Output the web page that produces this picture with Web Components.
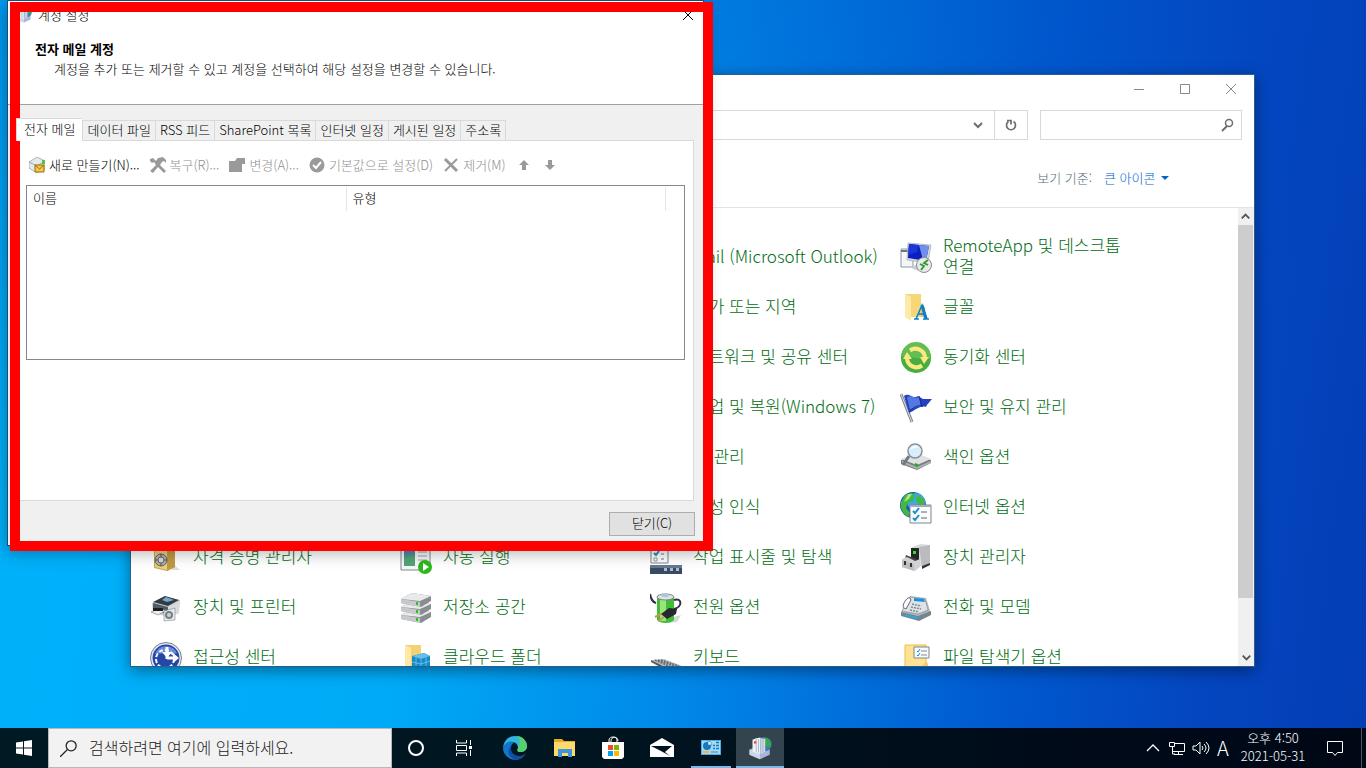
<!DOCTYPE html>
<html lang="ko">
<head>
<meta charset="utf-8">
<title>제어판</title>
<style>
  body {
    margin: 0;
    min-height: 100vh;
    display: flex;
    font-family: "Noto Sans CJK KR", "Noto Sans", sans-serif;
    font-size: 13px;
    font-weight: 300;
    line-height: 20px;
    color: #000;
  }
</style>
</head>
<body>
<desk-top>
  <control-panel></control-panel>
  <account-dialog heading="전자 메일 계정">
    계정을 추가 또는 제거할 수 있고 계정을 선택하여 해당 설정을 변경할 수 있습니다.
  </account-dialog>
  <red-frame></red-frame>
  <task-bar slot="taskbar"></task-bar>
</desk-top>

<script>
// Icon drawings, each in its own viewBox
const icons = {
  remote: ['0 0 32 32', `
    <path d="M1 7h12v18H1z" fill="#f4f6f8" stroke="#8c97a3"/><path d="M1 9h10" stroke="#6b7683" stroke-width="2"/>
    <path d="M11 26l9-6 7 5-8 4z" fill="#c9ccd0"/><path d="M8 1l23 2-3 18-21-3z" fill="#d6dade" stroke="#9aa0a6" stroke-width=".6"/>
    <path d="M9 2l20 2-3 15-18-3z" fill="#0a1fc0"/><path d="M19 3l10 1-3 15-3-1z" fill="#6f8fea"/><path d="M9 2l10 1-2 7-9 3z" fill="#1a35d8"/>
    <circle cx="24" cy="23" r="7.500" fill="#e8e9ea" stroke="#8b8e92"/>
    <path d="M20 22l4 2-3 4M28 18l-4 3 4 2" fill="none" stroke="#2f9a2a" stroke-width="1.800"/>`],
  fonts: ['0 0 32 32', `
    <path d="M5 2h16v23H9z" fill="#f5d777"/><path d="M5 2l6 3v24l-6-4z" fill="#ffe9a6"/>
    <path d="M12 25h9v-10h4v10z" fill="#e6c25c"/>
    <path d="M14 27h5M23 27h6M16 27l6-14 5 14M18 22h8" fill="none" stroke="#0d80c8" stroke-width="1.500"/><path d="M22 13l4 14" stroke="#0d80c8" stroke-width="3"/>`],
  sync: ['0 0 32 32', `
    <circle cx="16" cy="16" r="15" fill="#48ad40"/><path d="M1 15a15 15 0 0 1 30 0c-6 6-24-3-30 0z" fill="#62bd55"/>
    <path d="M10 8.500a9.500 9.500 0 0 1 15 7M22 23.500a9.500 9.500 0 0 1-15-7" fill="none" stroke="#fae97e" stroke-width="4"/>
    <path d="M3 17h9l-5-7zM20 15h9l-5 7z" fill="#fae97e"/>`],
  flag: ['0 0 32 32', `
    <path d="M1 2l11 28" stroke="#7f858b" stroke-width="3"/><path d="M1 2l11 28" stroke="#d8dbde" stroke-width="1"/>
    <path d="M4 4c6-4 8 4 14 0l5 3 9 0c-3 4-5 5-6 8-6-2-10 3-17 6z" fill="#2643bf"/>
    <path d="M7 5c6-3 7 3 12 0l2 10c-6-1-7 2-11 3z" fill="#5478e3"/><path d="M10 18c5-3 7-5 13-4M19 4l3 11" stroke="#152c91" fill="none"/>`],
  search: ['0 0 32 32', `
    <path d="M1 18l16-6 14 6v3l-14 7-16-6z" fill="#7c7f82"/><path d="M1 17l16-6 14 6-14 6z" fill="#dfe1e3"/><path d="M2 19l15 6 14-6v2l-14 6-15-6z" fill="#aeb2b6"/>
    <path d="M15 21l3 1v3l-3-1z" fill="#23b315"/><path d="M9 14l-6 9" stroke="#73787d" stroke-width="3"/>
    <circle cx="15" cy="9" r="7" fill="#d9edfc" stroke="#899098" stroke-width="1.500"/><path d="M10 8c2-5 7-5 9-2-4-1-6 0-9 2z" fill="#fff"/>`],
  internet: ['0 0 32 32', `
    <circle cx="13" cy="13" r="13" fill="#175bb5"/><circle cx="16" cy="10" r="9" fill="#3ba9e3"/>
    <path d="M5 3l7-2 3 2-2 6-5 1-2 6 4 5-2 4c-6-4-8-9-7-15zM17 3c4 1 7 4 8 8l-4 3-5-5z" fill="#45b83c"/><path d="M8 2l4 0-3 5-5 3z" fill="#a8e67c"/>
    <path d="M10 13h21v18H10z" fill="#fafbfc" stroke="#7f868d"/><path d="M10 14h21" stroke="#a6acb3" stroke-width="2"/>
    <path d="M13 19l2 2 4-5M13 26l2 2 4-5" fill="none" stroke="#168dcf" stroke-width="2"/><path d="M21 20h6M21 26h6" stroke="#5c6774"/>`],
  device: ['0 0 32 32', `
    <path d="M12 5l9-3 9 1v18l-7 4-11-3z" fill="#d9dadc"/><path d="M19 5l11-2v18l-8 3z" fill="#b9bbbe"/><path d="M11 6l8 0v14l-8-2z" fill="#242628"/>
    <path d="M13 9h3v3h-3z" fill="#32df22"/><path d="M22 24l8-3v2l-8 4z" fill="#333"/><path d="M6 13l12 5-5 3-8-4z" fill="#444"/>
    <path d="M2 17l5-2 8 4 5-2v8l-5 4-13-4z" fill="#d0d2d4"/><path d="M2 18l12 4v7L2 25z" fill="#bcbec1"/><path d="M5 19v4M11 21v4" stroke="#333" stroke-width="2"/>`],
  phone: ['0 0 32 32', `
    <path d="M1 20l9-16 16 2 5 16-14 6z" fill="#b0b8be"/><path d="M1 20l17 4 13-5v4l-12 6-18-5z" fill="#77848c"/>
    <path d="M2 19l8-14 15 2 3 11-10 4z" fill="#dfe3e5" stroke="#7d878f" stroke-width=".6"/><path d="M14 6l10 1 1 3-11-1z" fill="#1790df"/>
    <path d="M12 12l9 2M11 15l10 2M10 18l9 2" stroke="#7c8b99" stroke-width="1.500" stroke-dasharray="2 1"/>
    <path d="M4 16c-3-2 3-12 6-10l1 2-5 9z" fill="#fbfbfb" stroke="#667"/><path d="M5 23l13 3" stroke="#28a9e5" stroke-width="2"/>`],
  fileoptions: ['0 0 32 32', `
    <path d="M5 3h21v29H5z" fill="#ffe394" stroke="#e9bf48"/><path d="M21 26l5-7 2 3v10h-7z" fill="#f4cc62"/>
    <path d="M14 5h15v11H14z" fill="#f7fbff" stroke="#7d858d"/><path d="M17 9l1 1 2-3M17 13l1 1 2-3" fill="none" stroke="#1891d5"/><path d="M21 9h6M21 13h6" stroke="#818b95"/>`],
  safe: ['0 0 32 32', `
    <path d="M22 28h8l-8-7z" fill="#ddd"/><path d="M4 4l8-3 13 2v22l-8 4-13-3z" fill="#cfa84a"/><path d="M17 7l8-3v21l-8 4z" fill="#c09a45"/><path d="M5 6l12 2v20L5 25z" fill="#ebcf82"/>
    <circle cx="11" cy="18" r="6" fill="#aeb2ae" stroke="#62615b"/><path d="M11 12v12M5 18h12" stroke="#54534e"/><circle cx="11" cy="18" r="3" fill="#d8dad7" stroke="#666"/>`],
  printer: ['0 0 32 32', `
    <path d="M2 11l13-6 15 3-1 13-10 4-16-4z" fill="#c9ccd0"/><path d="M3 10l12-6 14 4-11 6z" fill="#343a42"/><path d="M12 8l4-3 8 3-7 2z" fill="#73abcd"/>
    <path d="M3 11l15 4v7L3 18z" fill="#555b62"/><path d="M18 15l11-6v12l-11 4z" fill="#d8dadc"/><path d="M1 20l10-4 4 3-7 4z" fill="#eceeef" stroke="#777" stroke-width=".6"/><path d="M3 16h10v3H3z" fill="#1c1f24"/>
    <path d="M14 19l11-3v12l-11 1z" fill="#e6e8e9" stroke="#858a8e" stroke-width=".6"/><circle cx="19" cy="23" r="4" fill="#778087"/><circle cx="19" cy="23" r="2" fill="#cbd2d6"/>`],
  access: ['0 0 32 32', `
    <circle cx="16" cy="16" r="15.500" fill="#e8ebef" stroke="#777f8b"/><circle cx="16" cy="16" r="13.500" fill="#2447a8"/><path d="M5 12a12 12 0 0 1 22-1c-7 3-15-1-22 1z" fill="#688bdc"/>
    <circle cx="15" cy="17" r="9" fill="none" stroke="#fff" stroke-width="2" stroke-dasharray="4 2"/>
    <path d="M17 5v12M17 16h8" stroke="#fff" stroke-width="3"/><path d="M12 10h10l-5 6zM23 11l6 5-6 5z" fill="#fff"/>`],
  autoplay: ['0 0 32 32', `
    <path d="M1 1h29v27H1z" fill="#f6f7f9" stroke="#818990"/><path d="M4 4h11v20H4z" fill="#4f8ca8"/><path d="M4 17c4-6 7 0 11-5v12H4z" fill="#54a475"/>
    <path d="M18 6h9M18 10h9M18 14h9M18 18h9" stroke="#9ca3a9"/><circle cx="25" cy="25" r="7" fill="#2cb91b"/><path d="M23 21l6 4-6 4z" fill="#fff"/>`],
  storage: ['0 0 32 32', `
    ${[23, 15, 7].map(y => `<path d="M1 ${y}l11-6 19 3v5l-10 6-20-4z" fill="#8a8d91"/><path d="M1 ${y}l11-6 19 3-11 5z" fill="#e9eaeb"/><path d="M1 ${y}l19 3v5l-19-4z" fill="#c7cacd"/><path d="M16 ${y + 3}h2v3h-2z" fill="#2bc51e"/>`).join('')}`],
  cloud: ['0 0 32 32', `
    <path d="M5 3h16v29H9z" fill="#f4d271"/><path d="M5 3l6 3v26H5z" fill="#ffe8a5"/>
    <path d="M12 14l12-3 6 3v18H12z" fill="#1689c9"/><path d="M12 14l12-3 6 3-9 3z" fill="#6abde5"/>
    <path d="M12 20l9 2 9-3M12 26l9 2 9-3M16 15v17M21 17v15M26 15v17" fill="none" stroke="#85cfee" stroke-width=".7"/>`],
  taskbar: ['0 0 32 32', `
    <path d="M1 1h17v20H1z" fill="#fff" stroke="#7e848b"/><path d="M4 11l2 2 3-4" fill="none" stroke="#168fd5" stroke-width="2"/>
    <path d="M4 16h3v3H4z" fill="#fff" stroke="#999"/><path d="M11 12h3M11 17h3" stroke="#777"/>
    <path d="M0 23h32v9H0z" fill="#384b65"/><path d="M0 23h32v3H0z" fill="#66788f"/><path d="M14 26h3v3h-3zM20 26h3v3h-3zM26 26h3v3h-3z" fill="#aebccb"/>`],
  power: ['0 0 32 32', `
    <path d="M17 31l10-1 4-7-7 2z" fill="#d7d7d7"/><path d="M7 5h17v23c-3 4-14 4-17 0z" fill="#42bd37"/><path d="M10 7h6v22h-6z" fill="#99e678"/>
    <ellipse cx="15.500" cy="5" rx="8.500" ry="3" fill="#dce2e6" stroke="#77848b"/><ellipse cx="15" cy="3" rx="4" ry="2" fill="#adc6d3"/>
    <path d="M0 2c1 5 2 8 6 9M24 8c8-3 9 7 0 9" fill="none" stroke="#33304b" stroke-width="2"/>
    <path d="M11 22l8-6 8 1-1 5-9 5z" fill="#272832"/><path d="M11 22l-6 3M14 25l-6 4" stroke="#c49a50" stroke-width="2"/>`],
  keyboard: ['0 0 32 32', `
    <path d="M1 18l13-1 18 7-13 5z" fill="#babec1"/><path d="M1 18l18 9v3L1 20z" fill="#585d62"/>
    <path d="M5 18l18 8M8 18l18 7M11 18l18 6" stroke="#656c72" stroke-width="1.500" stroke-dasharray="2 1"/>`],
  mailcpl: ['0 0 32 32', `
    <path d="M2 18l13-5 14 5v7l-13 6L2 25z" fill="#a9b6d8"/><path d="M2 18l14 6v7L2 25z" fill="#cdd6ea"/>
    <circle cx="22" cy="11" r="9.500" fill="#3f76ca"/><path d="M20 2c9 0 12 7 10 12-5 2-8-1-10-6z" fill="#36a947"/>
    <path d="M6 5l5-2v20l-5-2zM11 3l6-1v22l-6-1z" fill="#eef1f6"/><path d="M17 3l6 1v17l-6 3z" fill="#d3dae8"/>
    <path d="M11 4v18M14 4v18M17 3v21M20 4v18" stroke="#8d9ab5" stroke-width=".8"/><path d="M8 7h3v3H8z" fill="#e0432e"/>`],
  newmail: ['0 0 16 16', `
    <path d="M0 5l8-5 8 4v8l-8 4-8-5z" fill="#e4e9ee" stroke="#8b98a4" stroke-width=".7"/><path d="M0 5l8 4 8-5" fill="none" stroke="#9aa7b3"/><path d="M13 3h3v4h-3z" fill="#54c441"/>
    <path d="M6 8h9v7H6z" fill="#f5c945" stroke="#97700f" stroke-width="1"/><path d="M6 8l4.500 4L15 8" fill="none" stroke="#97700f"/>`],
  repair: ['0 0 16 16', `<path d="M0 2l3-1 3 3 2-3 5-1 3 3v3l-2-2-2 1-2 3 6 6-2 2-6-6-5 6-3-2 6-6-2-3-2 1-2-2z" fill="#9a9a9a"/>`],
  change: ['0 0 16 16', `<path d="M0 4h6l2-3h8v6h-3v8H0z" fill="#9a9a9a"/>`],
  check: ['0 0 16 16', `<circle cx="8" cy="8" r="7.500" fill="#9a9a9a"/><path d="M4 8l3 3 5-6" fill="none" stroke="#fff" stroke-width="2"/>`],
  remove: ['0 0 16 16', `<path d="M2 2l12 12" stroke="#9a9a9a" stroke-width="3"/><path d="M14 2L2 14" stroke="#9a9a9a" stroke-width="2"/>`],
  up: ['0 0 16 16', `<path d="M8 3l5 5h-3v5H6V8H3z" fill="#9a9a9a"/>`],
  down: ['0 0 16 16', `<path d="M8 13L3 8h3V3h4v5h3z" fill="#9a9a9a"/>`],
  close: ['0 0 16 16', `<path d="M3 3l10 10M13 3L3 13" stroke="currentColor"/>`],
  minimize: ['0 0 16 16', `<path d="M3 8.500h10" stroke="currentColor"/>`],
  maximize: ['0 0 16 16', `<path d="M3.500 3.500h9v9h-9z" fill="none" stroke="currentColor"/>`],
  chevron: ['0 0 16 16', `<path d="M4 6l4 4 4-4" fill="none" stroke="currentColor" stroke-width="2"/>`],
  refresh: ['0 0 16 16', `<path d="M10.500 4.500a4.500 4.500 0 1 1-5 0M4 3.500h4v4" fill="none" stroke="currentColor" stroke-width="1.700"/>`],
  find: ['0 0 16 16', `<circle cx="10" cy="6" r="3.500" fill="none" stroke="currentColor" stroke-width="1.500"/><path d="M8 9l-5 5" stroke="currentColor" stroke-width="2"/>`],
  lens: ['0 0 16 16', `<circle cx="10.500" cy="5.500" r="4.700" fill="none" stroke="currentColor" stroke-width="1.200"/><path d="M7 9l-7 7" stroke="currentColor" stroke-width="1.200"/>`],
  start: ['0 0 16 16', `<path d="M0 2.500l7-1V7.500H0zM8 1.300L16 0v7.500H8zM0 8.500h7v6l-7-1zM8 8.500h8V16l-8-1.200z" fill="#fff"/>`],
  cortana: ['0 0 24 24', `<circle cx="12" cy="12" r="7" fill="none" stroke="#fff" stroke-width="2"/>`],
  taskview: ['0 0 24 24', `<path d="M4.500 4v3h10V4M4.500 20v-3h10v3M4.500 9.500h10v5h-10zM18.500 4v5M18.500 14v6" fill="none" stroke="#fff"/><path d="M17 10h3v3h-3z" fill="#fff"/>`],
  edge: ['0 0 24 24', `
    <path d="M0 12C1 4 6 0 12 0c7 0 12 5 12 10 0 4-3 6-7 6-3 0-3-2-2-4 0-4-3-6-6-6-4 0-8 3-9 6z" fill="#2fb6e2"/>
    <path d="M13 0c7 0 11 5 11 10 0 4-3 6-7 6-3 0-3-2-2-4 1-4 3-6 0-11z" fill="#57cf70"/>
    <path d="M0 12c2-6 7-8 11-5-5 1-6 14 7 15-7 5-18-1-18-10z" fill="#1277cc"/>
    <path d="M9 9c-3 5 1 11 7 11 3 0 5-1 7-3-3 7-10 8-14 5-5-4-4-10 0-13z" fill="#104da0"/>`],
  explorer: ['0 0 24 24', `
    <path d="M2 3h8l2 2h11v15H2z" fill="#e7a92a"/><path d="M2 6h21v14H2z" fill="#ffda6a"/><path d="M6 13h14v8h-4v-4h-6v4H6z" fill="#3c96db"/>`],
  store: ['0 0 24 24', `
    <path d="M8 7V4c0-4 8-4 8 0v3M10 7V5c0-5 7-5 7 0" fill="none" stroke="#fff"/><path d="M1 6h22v15l-2 2H3l-2-2z" fill="#fff"/>
    <path d="M7 9h5v5H7z" fill="#f04e24"/><path d="M13 9h5v5h-5z" fill="#7eb900"/><path d="M7 15h5v5H7z" fill="#00a3ee"/><path d="M13 15h5v5h-5z" fill="#fdb800"/>`],
  mail: ['0 0 24 24', `<path d="M0 9l12-7 12 7v12H0z" fill="#fff"/><path d="M1 10h21l-7 6 5 4-9-5z" fill="#02131e"/>`],
  cpl: ['0 0 24 24', `
    <path d="M2 4h20v15H2z" fill="#4eaee4"/><path d="M3 5h18v13H3z" fill="#a3daf8"/><circle cx="8" cy="10" r="4" fill="#1979b9"/><path d="M9 5a4.500 4.500 0 0 1 4 4H9z" fill="#eaf6fd" stroke="#1979b9" stroke-width=".6"/>
    <path d="M14 12.500h2M17 12.500h3M14 9.500h2M17 9.500h3M17 6.500h3" stroke="#1979b9" stroke-width="1.500"/><path d="M4 16h6" stroke="#f4b53d" stroke-width="2"/><path d="M12 16h7" stroke="#3b8fc4"/>`],
  trayup: ['0 0 16 16', `<path d="M2 11l6-6 6 6" fill="none" stroke="#fff" stroke-width="1.300"/>`],
  network: ['0 0 18 16', `<path d="M6 3.500h10.500v8H5M10.500 12v2M6 14.500h9M1.500 2.500h5v4h-5zM4.500 7v7H7" fill="none" stroke="#fff"/>`],
  volume: ['0 0 18 16', `<path d="M1 6h3l4-4v12l-4-4H1zM10 6q2 2 0 4M12 4q4 4 0 8M14 2q6 6 0 12" fill="none" stroke="#fff"/>`],
  notice: ['0 0 18 18', `<path d="M1.500 2.500h15v11h-5l-2.500 3-2.500-3h-5z" fill="none" stroke="#fff"/>`],
  caret: ['0 0 8 8', `<path d="M0 2h8L4 6z" fill="currentColor"/>`]
};

class UiIcon extends HTMLElement {
  constructor() {
    super();
    this.attachShadow({ mode: "open" });
  }

  connectedCallback() {
    const [box, drawing] = icons[this.getAttribute("name")];
    const size = this.getAttribute("size") || 16;
    this.shadowRoot.innerHTML = `
      <style>
        :host { display: inline-flex; flex: none; }
      </style>
      <svg width="${size}" height="${size}" viewBox="${box}" aria-hidden="true">${drawing}</svg>
    `;
  }
}

customElements.define("ui-icon", UiIcon);

class DeskTop extends HTMLElement {
  constructor() {
    super();
    this.attachShadow({ mode: "open" });
  }

  connectedCallback() {
    this.shadowRoot.innerHTML = `
      <style>
        :host {
          flex: 1;
          display: flex;
          flex-direction: column;
          min-width: 0;
        }
        .wallpaper {
          position: relative;
          flex: 1;
          overflow: hidden;
          background:
            linear-gradient(to bottom, rgba(0, 70, 190, 0.25), transparent 70%),
            linear-gradient(96deg, #00b2fb 0%, #00aaf6 32%, #0088e8 52%, #005ad0 74%, #0446c0 88%, #033eb4 100%);
        }
      </style>
      <div class="wallpaper"><slot></slot></div>
      <slot name="taskbar"></slot>
    `;
  }
}

customElements.define("desk-top", DeskTop);

// Control panel entries: text, icon, column, row
const entries = [
  ["Mail (Microsoft Outlook)", "mailcpl", 3, 1],
  ["RemoteApp 및 데스크톱 연결", "remote", 4, 1],
  ["국가 또는 지역", "internet", 3, 2],
  ["글꼴", "fonts", 4, 2],
  ["네트워크 및 공유 센터", "internet", 3, 3],
  ["동기화 센터", "sync", 4, 3],
  ["백업 및 복원(Windows 7)", "storage", 3, 4],
  ["보안 및 유지 관리", "flag", 4, 4],
  ["색 관리", "device", 3, 5],
  ["색인 옵션", "search", 4, 5],
  ["음성 인식", "device", 3, 6],
  ["인터넷 옵션", "internet", 4, 6],
  ["자격 증명 관리자", "safe", 1, 7],
  ["자동 실행", "autoplay", 2, 7],
  ["작업 표시줄 및 탐색", "taskbar", 3, 7],
  ["장치 관리자", "device", 4, 7],
  ["장치 및 프린터", "printer", 1, 8],
  ["저장소 공간", "storage", 2, 8],
  ["전원 옵션", "power", 3, 8],
  ["전화 및 모뎀", "phone", 4, 8],
  ["접근성 센터", "access", 1, 9],
  ["클라우드 폴더", "cloud", 2, 9],
  ["키보드", "keyboard", 3, 9],
  ["파일 탐색기 옵션", "fileoptions", 4, 9]
];

class PanelItem extends HTMLElement {
  constructor() {
    super();
    this.attachShadow({ mode: "open" });
  }

  connectedCallback() {
    this.shadowRoot.innerHTML = `
      <style>
        :host { display: block; }
        a {
          display: flex;
          align-items: center;
          gap: 11px;
          height: 50px;
          width: 236px;
          color: #006c12;
          font-size: 17px;
          line-height: 21px;
          text-decoration: none;
        }
        a:hover { text-decoration: underline; }
        ui-icon { margin-top: 4px; }
        span { padding-bottom: 2px; }
      </style>
      <a href="#"><ui-icon name="${this.getAttribute("icon")}" size="32"></ui-icon><span><slot></slot></span></a>
    `;
  }
}

customElements.define("panel-item", PanelItem);

class ScrollBar extends HTMLElement {
  constructor() {
    super();
    this.attachShadow({ mode: "open" });
  }

  connectedCallback() {
    this.shadowRoot.innerHTML = `
      <style>
        :host {
          display: flex;
          flex-direction: column;
          width: 16px;
          background: #f0f0f0;
        }
        button {
          display: flex;
          justify-content: center;
          align-items: center;
          height: 17px;
          padding: 0;
          border: 0;
          background: none;
          color: #555;
        }
        .track { flex: 1; }
        .thumb { height: 88%; margin-right: 1px; background: #cdcdcd; }
        .up { transform: rotate(180deg); }
      </style>
      <button class="up" aria-label="위로"><ui-icon name="chevron" size="15"></ui-icon></button>
      <div class="track"><div class="thumb"></div></div>
      <button aria-label="아래로"><ui-icon name="chevron" size="15"></ui-icon></button>
    `;
  }
}

customElements.define("scroll-bar", ScrollBar);

class ControlPanel extends HTMLElement {
  constructor() {
    super();
    this.attachShadow({ mode: "open" });
  }

  connectedCallback() {
    const items = entries.map(([text, icon, col, row]) =>
      `<panel-item icon="${icon}" style="grid-area: ${row} / ${col}">${text}</panel-item>`
    ).join("");

    this.shadowRoot.innerHTML = `
      <style>
        :host {
          position: absolute;
          left: 130px;
          top: 74px;
          width: 1123px;
          height: 591px;
          display: flex;
          flex-direction: column;
          background: #fff;
          border: 1px solid #2a5e92;
          box-shadow: 0 4px 14px rgba(0, 0, 0, 0.4);
        }
        button {
          display: flex;
          justify-content: center;
          align-items: center;
          border: 0;
          padding: 0;
          background: none;
          color: #888;
        }
        .title {
          display: flex;
          justify-content: flex-end;
        }
        .title button { width: 46px; height: 28px; }
        .address {
          display: flex;
          gap: 12px;
          padding: 7px 12px 0;
        }
        .box {
          display: flex;
          align-items: center;
          box-sizing: border-box;
          height: 30px;
          border: 1px solid #d9d9d9;
          color: #6d6d6d;
        }
        .location { flex: 1; }
        .search { width: 202px; padding-right: 6px; }
        input {
          flex: 1;
          min-width: 0;
          border: 0;
          outline: 0;
          font: inherit;
        }
        .box button { width: 32px; height: 28px; color: #6d6d6d; }
        .box .refresh { width: 33px; border-left: 1px solid #d9d9d9; }
        .view {
          display: flex;
          justify-content: flex-end;
          align-items: center;
          box-sizing: border-box;
          height: 68px;
          padding: 8px 85px 0 0;
          border-bottom: 1px solid #dce6ef;
          color: #5a6b7b;
        }
        select {
          appearance: none;
          margin-left: 12px;
          margin-right: 6px;
          padding: 0;
          border: 0;
          background: none;
          color: #0066cc;
          font: inherit;
        }
        .view ui-icon { color: #0066cc; }
        .body {
          flex: 1;
          display: flex;
          min-height: 0;
          overflow: hidden;
        }
        .items {
          flex: 1;
          display: grid;
          grid-template-columns: repeat(4, 250px);
          grid-template-rows: repeat(9, 50px);
          padding: 23px 0 0 19px;
        }
      </style>
      <div class="title">
        <button aria-label="최소화"><ui-icon name="minimize"></ui-icon></button>
        <button aria-label="최대화"><ui-icon name="maximize"></ui-icon></button>
        <button aria-label="닫기"><ui-icon name="close"></ui-icon></button>
      </div>
      <div class="address">
        <div class="box location">
          <input type="text" aria-label="주소">
          <button aria-label="이전 위치"><ui-icon name="chevron"></ui-icon></button>
          <button class="refresh" aria-label="새로 고침"><ui-icon name="refresh"></ui-icon></button>
        </div>
        <div class="box search">
          <input type="text" aria-label="제어판 검색">
          <ui-icon name="find"></ui-icon>
        </div>
      </div>
      <div class="view">
        <label for="view-by">보기 기준:</label>
        <select id="view-by"><option>큰 아이콘</option></select>
        <ui-icon name="caret" size="8"></ui-icon>
      </div>
      <div class="body">
        <div class="items">${items}</div>
        <scroll-bar></scroll-bar>
      </div>
    `;
  }
}

customElements.define("control-panel", ControlPanel);

class ToolButton extends HTMLElement {
  constructor() {
    super();
    this.attachShadow({ mode: "open" });
  }

  connectedCallback() {
    const disabled = this.hasAttribute("disabled") ? "disabled" : "";
    const label = this.getAttribute("label");
    this.shadowRoot.innerHTML = `
      <style>
        :host { display: block; }
        button {
          display: flex;
          align-items: center;
          gap: 4px;
          padding: 0;
          border: 0;
          background: none;
          color: #000;
          font: inherit;
          white-space: nowrap;
        }
        button:disabled { color: #8f8f8f; }
      </style>
      <button ${disabled} ${label ? `aria-label="${label}"` : ""}>
        <ui-icon name="${this.getAttribute("icon")}"></ui-icon><slot></slot>
      </button>
    `;
  }
}

customElements.define("tool-button", ToolButton);

class AccountDialog extends HTMLElement {
  constructor() {
    super();
    this.attachShadow({ mode: "open" });
  }

  connectedCallback() {
    const tabs = ["전자 메일", "데이터 파일", "RSS 피드", "SharePoint 목록", "인터넷 일정", "게시된 일정", "주소록"];
    this.shadowRoot.innerHTML = `
      <style>
        :host {
          position: absolute;
          left: 7px;
          top: 0;
          width: 695px;
          height: 544px;
          display: flex;
          flex-direction: column;
          background: #f0f0f0;
          border: 1px solid #1d4a78;
          box-shadow: 0 6px 16px rgba(0, 0, 0, 0.35);
        }
        .title {
          display: flex;
          align-items: center;
          gap: 6px;
          height: 28px;
          padding-left: 8px;
          background: #fff;
        }
        .title span { flex: 1; }
        .title button {
          display: flex;
          justify-content: center;
          align-items: center;
          width: 30px;
          height: 28px;
          padding: 0;
          border: 0;
          background: none;
        }
        header {
          box-sizing: border-box;
          height: 76px;
          padding: 10px 27px;
          background: #fff;
          border-bottom: 1px solid #a0a0a0;
        }
        h1 { margin: 0; font-size: 13px; }
        p { margin: 0 0 0 19px; }
        .tabs {
          display: flex;
          align-items: flex-end;
          height: 22px;
          padding: 13px 8px 0;
        }
        .tabs button {
          box-sizing: border-box;
          height: 20px;
          padding: 0 4px 2px;
          border: 1px solid #d9d9d9;
          border-width: 1px 0 0 1px;
          background: #f0f0f0;
          font: inherit;
          line-height: 17px;
          white-space: nowrap;
        }
        .tabs button:last-child { border-right-width: 1px; }
        .tabs button.current {
          z-index: 1;
          height: 23px;
          padding: 0 7px 4px;
          margin-bottom: -1px;
          background: #fff;
        }
        .panel {
          flex: 1;
          display: flex;
          flex-direction: column;
          gap: 10px;
          margin: 0 9px;
          padding: 13px 8px 0;
          background: #fff;
          border: 1px solid #d9d9d9;
        }
        .tools {
          display: flex;
          align-items: center;
          gap: 10px;
          height: 21px;
          padding-left: 3px;
        }
        .list {
          box-sizing: border-box;
          height: 175px;
          border: 1px solid #828790;
        }
        table {
          table-layout: fixed;
          width: 639px;
          border-collapse: separate;
          border-spacing: 0 1px;
        }
        th {
          height: 22px;
          padding: 0 6px 2px;
          border-right: 1px solid #e5e5e5;
          font-weight: inherit;
          text-align: left;
        }
        footer {
          display: flex;
          justify-content: flex-end;
          padding: 11px 8px 9px;
        }
        footer button {
          width: 86px;
          height: 24px;
          padding: 0 0 2px;
          border: 1px solid #adadad;
          background: #e1e1e1;
          font: inherit;
        }
      </style>
      <div class="title">
        <ui-icon name="mailcpl"></ui-icon><span>계정 설정</span>
        <button aria-label="닫기"><ui-icon name="close"></ui-icon></button>
      </div>
      <header>
        <h1>${this.getAttribute("heading")}</h1>
        <p><slot></slot></p>
      </header>
      <div class="tabs" role="tablist">
        ${tabs.map((tab, i) => `<button role="tab" ${i === 0 ? 'class="current" aria-selected="true"' : ""}>${tab}</button>`).join("")}
      </div>
      <div class="panel" role="tabpanel">
        <div class="tools">
          <tool-button icon="newmail">새로 만들기(N)...</tool-button>
          <tool-button icon="repair" disabled>복구(R)...</tool-button>
          <tool-button icon="change" disabled>변경(A)...</tool-button>
          <tool-button icon="check" disabled>기본값으로 설정(D)</tool-button>
          <tool-button icon="remove" disabled>제거(M)</tool-button>
          <tool-button icon="up" label="위로 이동" disabled></tool-button>
          <tool-button icon="down" label="아래로 이동" disabled></tool-button>
        </div>
        <div class="list">
          <table><thead><tr><th>이름</th><th>유형</th></tr></thead></table>
        </div>
      </div>
      <footer><button>닫기(C)</button></footer>
    `;
  }
}

customElements.define("account-dialog", AccountDialog);

// Highlight drawn over the dialog
class RedFrame extends HTMLElement {
  constructor() {
    super();
    this.attachShadow({ mode: "open" });
  }

  connectedCallback() {
    this.shadowRoot.innerHTML = `
      <style>
        :host {
          position: absolute;
          left: 10px;
          top: 2px;
          box-sizing: border-box;
          width: 703px;
          height: 549px;
          border: 10px solid #f00;
          pointer-events: none;
        }
      </style>
    `;
  }
}

customElements.define("red-frame", RedFrame);

class TaskBar extends HTMLElement {
  constructor() {
    super();
    this.attachShadow({ mode: "open" });
  }

  connectedCallback() {
    const apps = [
      ["edge", "Microsoft Edge", ""],
      ["explorer", "파일 탐색기", ""],
      ["store", "Microsoft Store", ""],
      ["mail", "메일", ""],
      ["cpl", "제어판", "open"],
      ["mailcpl", "계정 설정", "open active"]
    ];
    this.shadowRoot.innerHTML = `
      <style>
        :host {
          display: flex;
          height: 40px;
          background: linear-gradient(90deg, #001a24, #001620 40%, #000a18 80%, #000816);
          color: #fff;
        }
        button {
          display: flex;
          justify-content: center;
          align-items: center;
          width: 48px;
          padding: 0;
          border: 0;
          background: none;
        }
        .search {
          display: flex;
          align-items: center;
          gap: 12px;
          box-sizing: border-box;
          width: 344px;
          padding: 0 11px;
          background: #f2f2f2;
          border: 1px solid #b8b8b8;
          color: #222;
        }
        input {
          flex: 1;
          min-width: 0;
          padding: 0 0 2px;
          border: 0;
          outline: 0;
          background: none;
          font: inherit;
          font-size: 16px;
        }
        input::placeholder { color: #222; opacity: 1; }
        .apps {
          flex: 1;
          display: flex;
          gap: 1px;
          margin-left: 3px;
        }
        .apps button { position: relative; }
        .open::after {
          content: "";
          position: absolute;
          left: 4px;
          right: 4px;
          bottom: 0;
          height: 2px;
          background: #76b9ed;
        }
        .active { background: #34444e; }
        .active::after { left: 0; right: 0; }
        .tray {
          display: flex;
          align-items: center;
          gap: 8px;
        }
        .tray button { width: 16px; height: 40px; }
        .tray .ime {
          width: 12px;
          color: #fff;
          font: inherit;
          font-size: 20px;
        }
        .clock {
          width: 72px;
          padding-bottom: 2px;
          line-height: 18px;
          text-align: center;
        }
        .notice {
          width: 53px;
          margin-right: 4px;
          border-right: 1px solid #4a5560;
        }
      </style>
      <button aria-label="시작"><ui-icon name="start"></ui-icon></button>
      <label class="search">
        <ui-icon name="lens" size="17"></ui-icon>
        <input type="text" placeholder="검색하려면 여기에 입력하세요." aria-label="검색">
      </label>
      <button aria-label="Cortana"><ui-icon name="cortana" size="24"></ui-icon></button>
      <button aria-label="작업 보기"><ui-icon name="taskview" size="24"></ui-icon></button>
      <div class="apps">
        ${apps.map(([icon, label, state]) => `<button class="${state}" aria-label="${label}"><ui-icon name="${icon}" size="24"></ui-icon></button>`).join("")}
      </div>
      <div class="tray">
        <button aria-label="숨겨진 아이콘"><ui-icon name="trayup"></ui-icon></button>
        <button aria-label="네트워크"><ui-icon name="network" size="18"></ui-icon></button>
        <button aria-label="볼륨"><ui-icon name="volume" size="18"></ui-icon></button>
        <button class="ime">A</button>
        <div class="clock">오후 4:50<br>2021-05-31</div>
      </div>
      <button class="notice" aria-label="알림"><ui-icon name="notice" size="18"></ui-icon></button>
    `;
  }
}

customElements.define("task-bar", TaskBar);
</script>
</body>
</html>
